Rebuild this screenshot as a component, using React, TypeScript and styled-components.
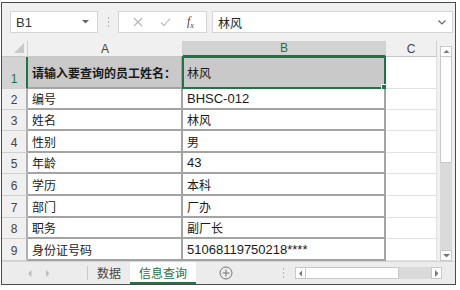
import styled, { createGlobalStyle } from 'styled-components';

const green = '#217346';
const cellBorder = '#a3a3a3';
const gridLine = '#e1e1e1';

const GlobalStyle = createGlobalStyle`
  body {
    margin: 0;
    background: #ffffff;
    font-family: 'Liberation Sans', 'Noto Sans CJK SC', sans-serif;
  }
`;

const Window = styled.div`
  margin: 2px 0 0 1px;
  width: 455px;
  height: 283px;
  box-sizing: border-box;
  border: 1px solid #4b4b4b;
  background: #f0f0f0;
  display: flex;
  flex-direction: column;
  overflow: hidden;
`;

/* formula bar */
const FormulaBar = styled.div`
  height: 38px;
  display: flex;
  align-items: center;
  padding: 0 2px 0 8px;
  flex-shrink: 0;
`;

const NameBox = styled.div`
  width: 88px;
  height: 22px;
  box-sizing: border-box;
  background: #fff;
  border: 1px solid #d5d5d5;
  display: flex;
  align-items: center;
  justify-content: space-between;
  padding: 0 8px 0 5px;
  font-size: 13px;
  color: #333;
`;

const Grip = styled.div`
  width: 20px;
  display: flex;
  flex-direction: column;
  align-items: center;
  gap: 2px;
  & > span {
    width: 1px;
    height: 2px;
    background: #b8b8b8;
  }
`;

const ButtonBox = styled.div`
  width: 89px;
  height: 22px;
  box-sizing: border-box;
  background: #fff;
  border: 1px solid #d5d5d5;
  display: flex;
  align-items: center;
  justify-content: space-around;
  padding: 0 4px 0 6px;
`;

const Fx = styled.span`
  font-family: 'Liberation Serif', serif;
  font-style: italic;
  font-size: 12px;
  color: #444;
  & sub {
    font-size: 8px;
  }
`;

const FormulaInput = styled.div`
  flex: 1;
  margin-left: 5px;
  height: 22px;
  box-sizing: border-box;
  background: #fff;
  border: 1px solid #d5d5d5;
  display: flex;
  align-items: center;
  justify-content: space-between;
  padding: 0 6px 0 5px;
  font-size: 12px;
  color: #222;
`;

/* sheet */
const Body = styled.div`
  display: flex;
  height: 220px;
  flex-shrink: 0;
`;

const Sheet = styled.div`
  width: 435px;
  display: grid;
  grid-template-columns: 26px 155px 203px 51px;
  grid-template-rows: 16px 32px 21px 21px 22px 21px 22px 22px 21px 22px;
  background: #fff;
`;

const Corner = styled.div`
  background: #f0f0f0;
  border-right: 1px solid #d0d0d0;
  border-bottom: 1px solid #c6c6c6;
  position: relative;
  &::after {
    content: '';
    position: absolute;
    right: 3px;
    bottom: 3px;
    border-left: 10px solid transparent;
    border-bottom: 10px solid #c9c9c9;
  }
`;

const ColHead = styled.div<{ $active?: boolean }>`
  box-sizing: border-box;
  background: ${(p) => (p.$active ? '#d3d3d3' : '#f0f0f0')};
  color: ${(p) => (p.$active ? green : '#444')};
  border-right: 1px solid #d0d0d0;
  border-bottom: ${(p) => (p.$active ? `2px solid ${green}` : '1px solid #c6c6c6')};
  display: flex;
  align-items: center;
  justify-content: center;
  font-size: 12px;
`;

const RowHead = styled.div<{ $active?: boolean }>`
  box-sizing: border-box;
  background: ${(p) => (p.$active ? '#d3d3d3' : '#f0f0f0')};
  color: ${(p) => (p.$active ? green : '#444')};
  border-right: ${(p) => (p.$active ? `2px solid ${green}` : '2px solid #b0b0b0')};
  border-bottom: 1px solid #cfcfcf;
  display: flex;
  align-items: flex-end;
  justify-content: center;
  padding-bottom: 2px;
  font-size: 12px;
`;

const Cell = styled.div<{ $cjk?: boolean; $fill?: boolean; $bold?: boolean; $framed?: boolean }>`
  box-sizing: border-box;
  position: relative;
  background: ${(p) => (p.$fill ? '#c9c9c9' : '#fff')};
  border-right: ${(p) => (p.$framed ? `2px solid ${cellBorder}` : `1px solid ${gridLine}`)};
  border-bottom: ${(p) => (p.$framed ? `2px solid ${cellBorder}` : `1px solid ${gridLine}`)};
  display: flex;
  align-items: center;
  padding: 0 4px;
  white-space: nowrap;
  overflow: visible;
  font-size: ${(p) => (p.$cjk ? '12px' : '13px')};
  font-weight: ${(p) => (p.$bold ? 700 : 400)};
  color: #1a1a1a;
`;

const Selection = styled.div`
  position: absolute;
  inset: -1px -2px -2px -1px;
  border: 2px solid ${green};
  pointer-events: none;
  &::after {
    content: '';
    position: absolute;
    right: -4px;
    bottom: -4px;
    width: 5px;
    height: 5px;
    background: ${green};
    border: 1px solid #fff;
  }
`;

/* vertical scrollbar */
const VScroll = styled.div`
  width: 18px;
  padding: 5px 2px 0 3px;
  box-sizing: border-box;
  display: flex;
  flex-direction: column;
`;

const ArrowBox = styled.div`
  width: 12px;
  height: 11px;
  box-sizing: border-box;
  background: #fff;
  border: 1px solid #c8c8c8;
  display: flex;
  align-items: center;
  justify-content: center;
  flex-shrink: 0;
`;

const VThumb = styled.div`
  width: 12px;
  height: 106px;
  box-sizing: border-box;
  background: #fff;
  border: 1px solid #c8c8c8;
  border-top: none;
`;

const VTrack = styled.div`
  flex: 1;
  width: 12px;
  background: #dadada;
`;

/* tab bar */
const TabBar = styled.div`
  flex: 1;
  display: flex;
  align-items: stretch;
  background: #ececec;
  border-top: 1px solid #d4d4d4;
`;

const NavArrows = styled.div`
  width: 86px;
  display: flex;
  align-items: center;
  padding-left: 26px;
  gap: 14px;
  box-sizing: border-box;
  border-right: 1px solid #c8c8c8;
  margin: 4px 0;
`;

const Tab = styled.div<{ $active?: boolean }>`
  display: flex;
  align-items: center;
  padding: 0 9px;
  font-size: 12px;
  color: ${(p) => (p.$active ? green : '#444')};
  background: ${(p) => (p.$active ? '#fff' : 'transparent')};
  border-bottom: ${(p) => (p.$active ? `2px solid ${green}` : '2px solid transparent')};
  margin-top: ${(p) => (p.$active ? '0' : '1px')};
`;

const AddSheet = styled.div`
  display: flex;
  align-items: center;
  margin-left: 23px;
`;

const TabGrip = styled(Grip)`
  width: 12px;
  margin-left: 44px;
  justify-content: center;
`;

const HScroll = styled.div`
  display: flex;
  align-items: center;
  margin-left: 6px;
  width: 147px;
`;

const HArrow = styled(ArrowBox)`
  width: 11px;
  height: 12px;
`;

const HThumb = styled.div`
  width: 93px;
  height: 12px;
  box-sizing: border-box;
  background: #fff;
  border: 1px solid #c8c8c8;
  border-left: none;
`;

const HTrack = styled.div`
  flex: 1;
  height: 12px;
  background: #dadada;
`;

const Tri = ({ dir, color = '#777', size = 5 }: { dir: 'up' | 'down' | 'left' | 'right'; color?: string; size?: number }) => {
  const pts = {
    up: '0,5 5,0 10,5',
    down: '0,0 10,0 5,5',
    left: '5,0 5,10 0,5',
    right: '0,0 0,10 5,5',
  }[dir];
  const vertical = dir === 'up' || dir === 'down';
  return (
    <svg width={vertical ? size * 1.4 : size * 0.7} height={vertical ? size * 0.7 : size * 1.4} viewBox={vertical ? '0 0 10 5' : '0 0 5 10'}>
      <polygon points={pts} fill={color} />
    </svg>
  );
};

type Row = { a: string; b: string; h: number };

const rows: Row[] = [
  { a: '请输入要查询的员工姓名：', b: '林风', h: 1 },
  { a: '编号', b: 'BHSC-012', h: 2 },
  { a: '姓名', b: '林风', h: 3 },
  { a: '性别', b: '男', h: 4 },
  { a: '年龄', b: '43', h: 5 },
  { a: '学历', b: '本科', h: 6 },
  { a: '部门', b: '厂办', h: 7 },
  { a: '职务', b: '副厂长', h: 8 },
  { a: '身份证号码', b: '51068119750218****', h: 9 },
];

const isCjk = (s: string) => /^[\u3000-\u9fff\uff00-\uffef]+$/.test(s);

export default function App() {
  return (
    <>
      <GlobalStyle />
      <Window>
        <FormulaBar>
          <NameBox>
            <span>B1</span>
            <Tri dir="down" color="#666" size={5} />
          </NameBox>
          <Grip>
            <span />
            <span />
            <span />
          </Grip>
          <ButtonBox>
            <svg width="10" height="10" viewBox="0 0 10 10">
              <path d="M1 1 L9 9 M9 1 L1 9" stroke="#b5b5b5" strokeWidth="1.1" fill="none" />
            </svg>
            <svg width="11" height="10" viewBox="0 0 11 10">
              <path d="M1 5.5 L4 8.5 L10 1.5" stroke="#b5b5b5" strokeWidth="1.1" fill="none" />
            </svg>
            <Fx>
              f<sub>x</sub>
            </Fx>
          </ButtonBox>
          <FormulaInput>
            <span>林风</span>
            <svg width="8" height="5" viewBox="0 0 8 5">
              <path d="M0.5 0.5 L4 4 L7.5 0.5" stroke="#666" strokeWidth="1.2" fill="none" />
            </svg>
          </FormulaInput>
        </FormulaBar>

        <Body>
          <Sheet>
            <Corner />
            <ColHead>A</ColHead>
            <ColHead $active>B</ColHead>
            <ColHead>C</ColHead>
            {rows.map((r) => {
              const first = r.h === 1;
              return [
                <RowHead key={`h${r.h}`} $active={first}>
                  {r.h}
                </RowHead>,
                <Cell key={`a${r.h}`} $cjk $framed $fill={first} $bold={first}>
                  {r.a}
                </Cell>,
                <Cell key={`b${r.h}`} $cjk={isCjk(r.b)} $framed $fill={first}>
                  {r.b}
                  {first && <Selection />}
                </Cell>,
                <Cell key={`c${r.h}`} />,
              ];
            })}
          </Sheet>
          <VScroll>
            <ArrowBox>
              <Tri dir="up" color="#777" size={5} />
            </ArrowBox>
            <VThumb />
            <VTrack />
            <ArrowBox>
              <Tri dir="down" color="#777" size={5} />
            </ArrowBox>
          </VScroll>
        </Body>

        <TabBar>
          <NavArrows>
            <Tri dir="left" color="#bdbdbd" size={5} />
            <Tri dir="right" color="#bdbdbd" size={5} />
          </NavArrows>
          <Tab>数据</Tab>
          <Tab $active>信息查询</Tab>
          <AddSheet>
            <svg width="14" height="14" viewBox="0 0 14 14">
              <circle cx="7" cy="7" r="6" stroke="#777" strokeWidth="1" fill="none" />
              <path d="M7 3.5 V10.5 M3.5 7 H10.5" stroke="#777" strokeWidth="1" />
            </svg>
          </AddSheet>
          <TabGrip>
            <span />
            <span />
            <span />
          </TabGrip>
          <HScroll>
            <HArrow>
              <Tri dir="left" color="#777" size={5} />
            </HArrow>
            <HThumb />
            <HTrack />
            <HArrow>
              <Tri dir="right" color="#777" size={5} />
            </HArrow>
          </HScroll>
        </TabBar>
      </Window>
    </>
  );
}
